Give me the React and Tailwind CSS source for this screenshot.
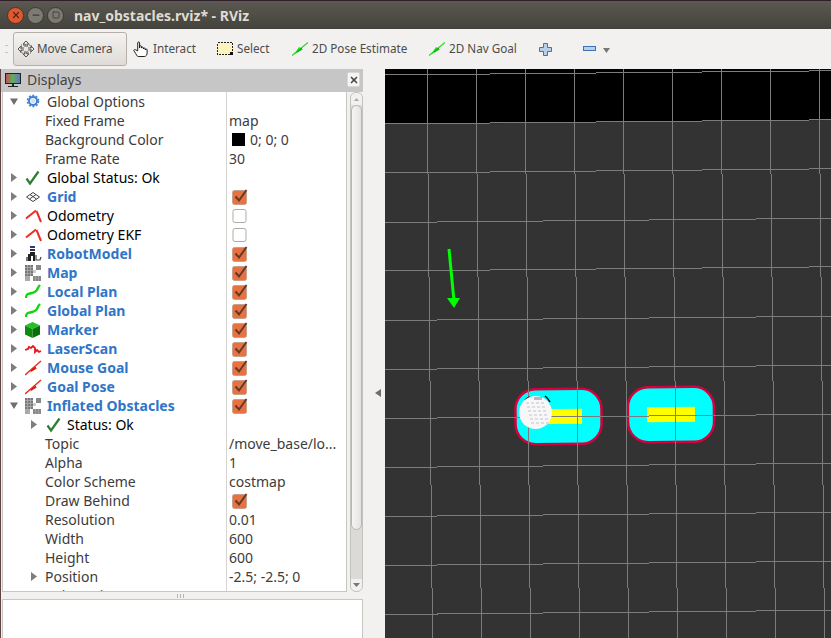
import { X, Minus, Square } from 'lucide-react'

const Expander = ({ open }) => (
  <svg width="9" height="9" viewBox="0 0 9 9" className="shrink-0">
    {open ? <path d="M1 1.500h8L5 8z" fill="#6e6e6e" /> : <path d="M2 0l6 4.500L2 9z" fill="#7d7d7d" />}
  </svg>
)

const GearIcon = () => (
  <svg width="16" height="16" viewBox="0 0 16 16">
    <circle cx="8" cy="7" r="4" fill="none" stroke="#3f7fd0" strokeWidth="2" />
    <circle cx="8" cy="7" r="5.500" fill="none" stroke="#3f7fd0" strokeWidth="1.600" strokeDasharray="2 1.500" />
    <circle cx="8" cy="7" r="2.200" fill="#cfe0f5" />
  </svg>
)

const CheckIcon = () => (
  <svg width="16" height="16" viewBox="0 0 16 16">
    <path d="M1.500 8.500l3.500 5L13.500 1.500" fill="none" stroke="#2f7d32" strokeWidth="2.200" />
  </svg>
)

const GridIcon = () => (
  <svg width="16" height="16" viewBox="0 0 16 16" fill="none" stroke="#444" strokeWidth="1">
    <path d="M8 3.500L14.500 8 8 12.500 1.500 8z" />
    <path d="M5 5.500l6.500 4.500M11 5.500L4.500 10" />
  </svg>
)

const OdomIcon = () => (
  <svg width="17" height="16" viewBox="0 0 17 16" fill="none" stroke="#ee2c20" strokeWidth="2">
    <path d="M1 10.500L11 2.500" />
    <path d="M11.500 3L16 14" />
  </svg>
)

const RobotIcon = () => (
  <svg width="17" height="16" viewBox="0 0 17 16">
    <rect x="5" y="0" width="5" height="2" fill="#2a3a80" />
    <rect x="5" y="3" width="5" height="2" fill="#333" />
    <path d="M3 15V8h2V6h5v9H8v-5H6v5z" fill="#222" />
    <path d="M11 9v5h4l1-3" fill="none" stroke="#444" strokeWidth="1.200" />
    <rect x="1" y="11" width="2" height="4" fill="#777" />
  </svg>
)

const MapIcon = () => (
  <svg width="16" height="16" viewBox="0 0 16 16" shapeRendering="crispEdges">
    <rect width="16" height="16" fill="#fff" />
    <rect x="0" y="0" width="8" height="11" fill="#777" />
    <rect x="0" y="11" width="5" height="5" fill="#aaa" />
    <rect x="11" y="0" width="5" height="5" fill="#888" />
    <rect x="8" y="11" width="8" height="5" fill="#888" />
    <rect x="8" y="5" width="3" height="3" fill="#ccc" />
    <path d="M2.500 0v11M5.500 0v11M0 2.500h8M0 5.500h8M0 8.500h8M10.500 11v5M13.500 11v5" stroke="#a5a5a5" strokeWidth="1" />
  </svg>
)

const PlanIcon = () => (
  <svg width="16" height="16" viewBox="0 0 16 16">
    <path d="M1 14c0-5 3-4 6-5s4-1 5-3 1-3 3-5" fill="none" stroke="#12d612" strokeWidth="2.400" />
  </svg>
)

const MarkerIcon = () => (
  <svg width="15" height="16" viewBox="0 0 15 16">
    <path d="M7.500 0L15 3.500 7.500 7 0 3.500z" fill="#26c026" />
    <path d="M0 3.500L7.500 7v9L0 12.500z" fill="#0e8a0e" />
    <path d="M15 3.500L7.500 7v9l7.500-3.500z" fill="#0a6e0a" />
  </svg>
)

const LaserIcon = () => (
  <svg width="17" height="16" viewBox="0 0 17 16">
    <path d="M0 9l3-1 1-2 2 1 2-2 2 2v4l2-2 2 2 2-1" fill="none" stroke="#e8141c" strokeWidth="1.800" />
  </svg>
)

const GoalIcon = ({ color = '#ee2a1c', dark = '#a81a10' }) => (
  <svg width="17" height="16" viewBox="0 0 17 16">
    <path d="M0 15L16 1" stroke={color} strokeWidth="1.400" />
    <path d="M5 12.500l3.500-5.500 3.500 1.500z" fill={color} />
    <path d="M6 11l5-4" stroke={dark} strokeWidth="1" />
  </svg>
)

const Checkbox = ({ checked }) => checked ? (
  <svg width="16" height="16" viewBox="0 0 16 16" className="shrink-0">
    <rect x="0.500" y="1.500" width="14" height="14" rx="2" fill="#e9703f" stroke="#c9a08c" />
    <path d="M3.500 7.500l3.500 4L14.500 1" fill="none" stroke="#5e3a2c" strokeWidth="2" />
  </svg>
) : (
  <svg width="16" height="16" viewBox="0 0 16 16" className="shrink-0">
    <rect x="1" y="1.500" width="13" height="13" rx="2" fill="#fff" stroke="#aeaba6" />
  </svg>
)

const rows = [
  { kind: 'group', open: true, icon: <GearIcon />, name: 'Global Options', tone: 'text-[#3c3c3c]' },
  { name: 'Fixed Frame', value: 'map' },
  { name: 'Background Color', value: '0; 0; 0', swatch: true },
  { name: 'Frame Rate', value: '30' },
  { kind: 'group', icon: <CheckIcon />, name: 'Global Status: Ok', tone: 'text-black' },
  { kind: 'group', icon: <GridIcon />, name: 'Grid', on: true },
  { kind: 'group', icon: <OdomIcon />, name: 'Odometry', tone: 'text-black', off: true },
  { kind: 'group', icon: <OdomIcon />, name: 'Odometry EKF', tone: 'text-black', off: true },
  { kind: 'group', icon: <RobotIcon />, name: 'RobotModel', on: true },
  { kind: 'group', icon: <MapIcon />, name: 'Map', on: true },
  { kind: 'group', icon: <PlanIcon />, name: 'Local Plan', on: true },
  { kind: 'group', icon: <PlanIcon />, name: 'Global Plan', on: true },
  { kind: 'group', icon: <MarkerIcon />, name: 'Marker', on: true },
  { kind: 'group', icon: <LaserIcon />, name: 'LaserScan', on: true },
  { kind: 'group', icon: <GoalIcon />, name: 'Mouse Goal', on: true },
  { kind: 'group', icon: <GoalIcon />, name: 'Goal Pose', on: true },
  { kind: 'group', open: true, icon: <MapIcon />, name: 'Inflated Obstacles', on: true },
  { kind: 'status', name: 'Status: Ok' },
  { name: 'Topic', value: '/move_base/lo...' },
  { name: 'Alpha', value: '1' },
  { name: 'Color Scheme', value: 'costmap' },
  { name: 'Draw Behind', on: true },
  { name: 'Resolution', value: '0.01' },
  { name: 'Width', value: '600' },
  { name: 'Height', value: '600' },
  { name: 'Position', value: '-2.5; -2.5; 0', expand: true },
  { name: 'Orientation', value: '0; 0; 0; 1', expand: true },
]

function NameCell({ r }) {
  if (r.kind === 'group') {
    const bold = r.on ? 'font-bold text-[#2f75c8]' : r.tone
    return (
      <div className="flex items-center w-[223px] pl-[6px]">
        <Expander open={r.open} />
        <span className="w-[20px] ml-[7px] shrink-0 flex">{r.icon}</span>
        <span className={`ml-[2px] ${bold}`}>{r.name}</span>
      </div>
    )
  }
  if (r.kind === 'status') {
    return (
      <div className="flex items-center w-[223px] pl-[26px] text-black">
        <Expander />
        <span className="w-[20px] ml-[8px] shrink-0 flex"><CheckIcon /></span>
        <span className="ml-[1px]">{r.name}</span>
      </div>
    )
  }
  return (
    <div className="flex items-center w-[223px] pl-[26px]">
      <span className="w-[16px] shrink-0 flex">{r.expand && <Expander />}</span>
      <span>{r.name}</span>
    </div>
  )
}

function Row({ r }) {
  return (
    <div className="flex h-[19px] shrink-0 items-center text-[14px] text-[#3c3c3c] whitespace-nowrap">
      <NameCell r={r} />
      <div className="flex items-center pl-[2px] h-full border-l border-[#d6d4d1] flex-1">
        {r.swatch && <span className="w-[13px] h-[13px] bg-black mr-[5px] ml-[3px]" />}
        {(r.on || r.off) && <span className="ml-[3px]"><Checkbox checked={r.on} /></span>}
        {r.value && <span>{r.value}</span>}
      </div>
    </div>
  )
}

const MoveIcon = () => (
  <svg width="18" height="18" viewBox="0 0 18 18" fill="none" stroke="#555" strokeWidth="1">
    <path d="M9 1l-3 3h2v3M9 1l3 3h-2v3M9 17l-3-3h2v-3M9 17l3-3h-2v-3M1 9l3-3v2h3M1 9l3 3v-2h3M17 9l-3-3v2h-3M17 9l-3 3v-2h-3" />
    <rect x="4" y="5" width="10" height="8" strokeDasharray="1 1" />
  </svg>
)

const HandIcon = () => (
  <svg width="16" height="18" viewBox="0 0 17 18" fill="#fff" stroke="#111" strokeWidth="1">
    <path d="M5 11V2.500a1 1 0 0 1 2 0V8V6.500a1 1 0 0 1 2 0V8a1 1 0 0 1 2 0v1a1 1 0 0 1 2 0v1a1 1 0 0 1 2 0v3c0 2-1 4-3 4H6c-1.500 0-2-1-3-3l-2-3c-.5-1 1-2 2-1z" />
  </svg>
)

const SelectIcon = () => (
  <svg width="16" height="16" viewBox="0 0 16 16" shapeRendering="crispEdges">
    <rect x="0.500" y="1.500" width="15" height="12" fill="#fbf4bd" stroke="#222" strokeDasharray="2 1" />
    <rect x="13" y="11" width="3" height="3" fill="#111" />
  </svg>
)

const ToolGoal = () => (
  <svg width="16" height="14" viewBox="0 0 16 14">
    <path d="M0 13.500L16 0.500" stroke="#18e018" strokeWidth="1.200" />
    <path d="M2 12.500L7 5l4 2.500z" fill="#18e018" />
    <path d="M5 10l5-4" stroke="#0a7a0a" strokeWidth="0.800" />
  </svg>
)

function Tool({ w, icon, label }) {
  return (
    <div className={`flex items-center gap-[4px] shrink-0 ${w}`}>
      {icon}
      <span>{label}</span>
    </div>
  )
}

const verticals = [42, 91, 140, 189, 238, 287, 336, 385, 434]
const horizontals = [6, 55, 104, 153.500, 202, 251.500, 300.500, 349.500, 398.500, 447.500, 496.500, 545.500]

function Scene() {
  return (
    <svg width="446" height="569" viewBox="0 0 446 569" className="block">
      <rect width="446" height="569" fill="#000" />
      <path d="M0 55L446 51V569H0z" fill="#333" />
      <g transform="rotate(-0.5 173 347)">
        <rect x="130.500" y="320" width="86" height="55" rx="20" fill="#00ffff" stroke="#d8003c" strokeWidth="2.500" />
        <rect x="149" y="340" width="48" height="15" fill="#ffff00" />
      </g>
      <g transform="rotate(-0.5 286 345)">
        <rect x="243" y="318" width="86" height="55" rx="20" fill="#00ffff" stroke="#d8003c" strokeWidth="2.500" />
        <rect x="262" y="338" width="48" height="15" fill="#ffff00" />
      </g>
      <g stroke="#7c7c7c" strokeWidth="1" shapeRendering="crispEdges">
        {verticals.map(x => <line key={x} x1={x} y1="0" x2={x + 5.500} y2="569" />)}
        {horizontals.map(y => <line key={y} x1="0" y1={y} x2="446" y2={y - 4.200} />)}
      </g>
      <path d="M64 180L69 232" stroke="#00ff00" strokeWidth="3" />
      <path d="M62 229H75L69 239z" fill="#00ff00" />
      <path d="M140 331a17 17 0 0 1 5-3M160 327a17 17 0 0 1 5 6" fill="none" stroke="#000" strokeWidth="1.500" />
      <circle cx="150.500" cy="343.500" r="16.500" fill="#f7f7f7" />
      <g fill="#dcdce2" shapeRendering="crispEdges">
        {[0, 1, 2, 3, 4, 5].map(i => [0, 1, 2, 3].map(j => (
          <rect key={`${i}-${j}`} x={141 + j * 5 + i} y={333 + i * 4} width="3" height="2" />
        )))}
        <rect x="149" y="328" width="8" height="3" fill="#b4b8c4" />
      </g>
    </svg>
  )
}

export default function App() {
  return (
    <div className="w-[831px] h-[638px] flex flex-col overflow-hidden bg-[#f2f1f0] font-['Noto_Sans',sans-serif]">
      <div className="h-[29px] shrink-0 flex items-center border-t border-[#2f1f2a] bg-gradient-to-b from-[#5b5951] to-[#43423c]">
        <div className="flex items-center gap-[3px] ml-[7px]">
          <span className="w-[17px] h-[17px] rounded-full bg-[#e2572d] flex items-center justify-center border border-[#3a3a36]">
            <X size={10} strokeWidth={3} color="#4a2a1a" />
          </span>
          <span className="w-[17px] h-[17px] rounded-full bg-[#7c7a72] flex items-center justify-center border border-[#3a3a36]">
            <Minus size={10} strokeWidth={3} color="#3c3b36" />
          </span>
          <span className="w-[17px] h-[17px] rounded-full bg-[#7c7a72] flex items-center justify-center border border-[#3a3a36]">
            <Square size={8} strokeWidth={2.500} color="#3c3b36" />
          </span>
        </div>
        <span className="ml-[10px] text-[14px] font-bold text-[#dfdbd2]">nav_obstacles.rviz* - RViz</span>
      </div>

      <div className="h-[40px] shrink-0 flex items-center text-[11.7px] text-[#4c4c4c] whitespace-nowrap">
        <div className="w-[3px] h-[8px] ml-[5px] mr-[5px] border-y border-[#c8c5c0]" />
        <div className="w-[114px] h-[34px] flex items-center gap-[2px] pl-[3px] mr-[6px] rounded-[3px] border border-[#b5b1aa] bg-gradient-to-b from-[#f4f3f1] to-[#dedbd7] shrink-0">
          <MoveIcon />
          <span>Move Camera</span>
        </div>
        <Tool w="w-[84px]" icon={<HandIcon />} label="Interact" />
        <Tool w="w-[75px]" icon={<SelectIcon />} label="Select" />
        <Tool w="w-[137px]" icon={<ToolGoal />} label="2D Pose Estimate" />
        <Tool w="w-[110px]" icon={<ToolGoal />} label="2D Nav Goal" />
        <svg width="13" height="13" viewBox="0 0 13 13" className="shrink-0">
          <path d="M4.500 0.500h4v4h4v4h-4v4h-4v-4h-4v-4h4z" fill="#b9cfe9" stroke="#3f72b5" />
        </svg>
        <svg width="13" height="6" viewBox="0 0 13 6" className="ml-[31px] shrink-0">
          <rect x="0.500" y="0.500" width="12" height="4" fill="#b9cfe9" stroke="#3f72b5" />
        </svg>
        <svg width="7" height="5" viewBox="0 0 7 5" className="ml-[7px] mt-[3px] shrink-0">
          <path d="M0 0h7L3.500 5z" fill="#777" />
        </svg>
      </div>

      <div className="flex-1 flex min-h-0 border-l border-[#5f4444]">
        <div className="w-[362px] shrink-0 flex flex-col">
          <div className="h-[23px] shrink-0 flex items-center bg-[#c6c6c6] pl-[4px] pr-[3px] pb-[2px]">
            <svg width="16" height="16" viewBox="0 0 16 16" className="shrink-0">
              <defs>
                <linearGradient id="screen" x1="0" x2="1" y1="0" y2="0">
                  <stop offset="0" stopColor="#c24f4f" />
                  <stop offset="0.5" stopColor="#5fae5f" />
                  <stop offset="1" stopColor="#5f6fd0" />
                </linearGradient>
              </defs>
              <rect x="0.500" y="1.500" width="15" height="10" fill="url(#screen)" stroke="#222" />
              <path d="M7 12h2v2H7zM3 14h10v1H3z" fill="#222" />
            </svg>
            <span className="ml-[6px] text-[14px] text-[#444]">Displays</span>
            <span className="ml-auto w-[13px] h-[15px] rounded-[2px] bg-[#f5f5f5] border border-[#d8d8d8] flex items-center justify-center">
              <X size={10} strokeWidth={4} color="#444" />
            </span>
          </div>
          <div className="h-[500px] shrink-0 flex pl-[1px]">
            <div className="w-[345px] shrink-0 h-full overflow-hidden bg-white border border-t-0 border-[#c8c6c3] flex flex-col">
              {rows.map(r => <Row key={r.name} r={r} />)}
            </div>
            <div className="ml-[3px] w-[13px] h-full flex flex-col rounded-[6px] border border-[#c4c2bf] bg-[#dcdad7] overflow-hidden">
              <div className="h-[12px] shrink-0 bg-[#f2f1f0] flex items-center justify-center">
                <svg width="5" height="3" viewBox="0 0 5 3"><path d="M0 3L2.500 0 5 3z" fill="#aaa" /></svg>
              </div>
              <div className="h-[425px] shrink-0 rounded-[6px] border border-[#b8b6b3] bg-gradient-to-r from-[#f6f5f4] to-[#e4e3e1]" />
              <div className="flex-1" />
              <div className="h-[12px] shrink-0 bg-[#f2f1f0] flex items-center justify-center">
                <svg width="7" height="4" viewBox="0 0 7 4"><path d="M0 0h7L3.500 4z" fill="#777" /></svg>
              </div>
            </div>
          </div>
          <div className="h-[7px] shrink-0 flex items-center justify-center gap-[1px] pr-[4px]">
            <span className="w-[1px] h-[4px] bg-[#b5b3b0]" />
            <span className="w-[1px] h-[4px] bg-[#b5b3b0] ml-[1px]" />
            <span className="w-[1px] h-[4px] bg-[#b5b3b0] ml-[1px]" />
          </div>
          <div className="flex-1 ml-[1px] bg-white border border-b-0 border-[#c8c6c3]" />
        </div>

        <div className="w-[22px] shrink-0 pt-[320px] pl-[12px]">
          <svg width="6" height="8" viewBox="0 0 6 8"><path d="M6 0v8L0 4z" fill="#6e6e6e" /></svg>
        </div>

        <Scene />
      </div>
    </div>
  )
}
